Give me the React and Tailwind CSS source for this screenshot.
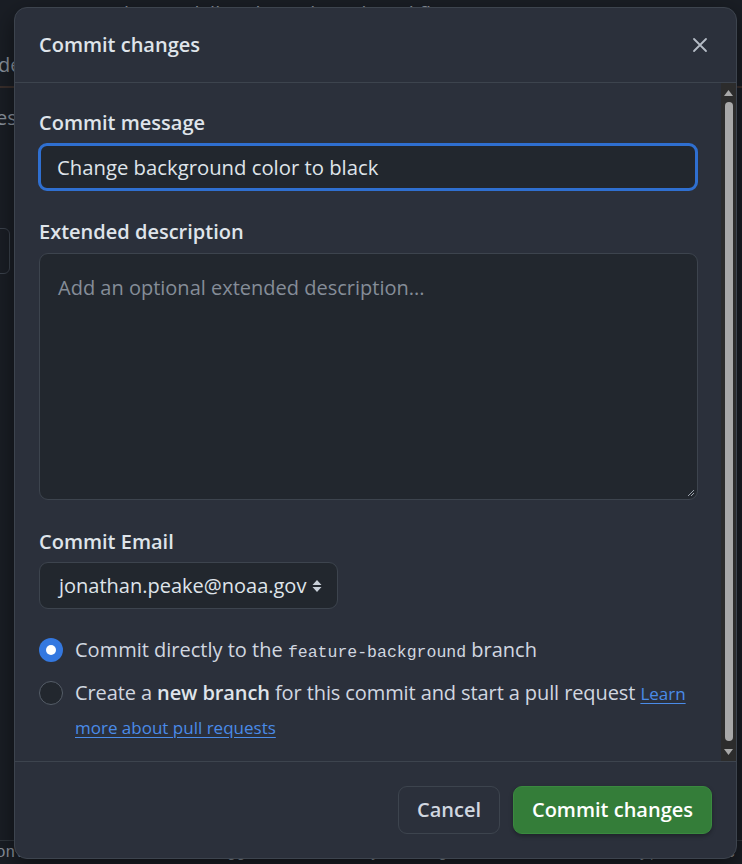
import React from "react";

const sans = { fontFamily: '"Open Sans", "Noto Sans", sans-serif' };

export default function App() {
  return (
    <div className="relative w-[742px] h-[864px] overflow-hidden bg-[#1a1e25]" style={sans}>
      {/* background page (dimmed) */}
      <div className="flex flex-col h-full text-[#8b939e]">
        <div className="flex items-center h-[60px] px-[60px] gap-4 text-[20px] -mt-[16px]">
          <span>jonpeake</span><span>/</span><span>skills-release-based-workflow</span>
        </div>
        <div className="flex items-center h-[44px] px-0 text-[20px] border-b-2 border-[#3a2f2c]">
          <span className="-ml-[2px]">de</span>
        </div>
        <div className="h-[60px] flex items-center text-[20px] -ml-[4px]">es</div>
        <div className="ml-[-20px] mt-[80px] w-[30px] h-[46px] border border-[#3b424c] rounded-[6px]" />
        <div className="flex-1" />
        <div className="h-[24px] border-t border-[#30363d] text-[16px] leading-[24px] whitespace-nowrap -ml-[4px]" style={{ fontFamily: '"Liberation Mono", monospace' }}>
          ontrol + shift + m to toggle the tab key moving focus. Alternatively, use esc then
        </div>
      </div>

      {/* modal */}
      <div className="absolute left-[14px] top-[7px] w-[723px] h-[852px] bg-[#2b303b] border border-[#3d444e] rounded-[13px] flex flex-col text-[#d1d7e0] shadow-[0_8px_24px_rgba(0,0,0,0.5)]">
        <div className="h-[75px] shrink-0 flex items-center justify-between pl-[24px] pr-[28px] border-b border-[#3d444e]">
          <span className="text-[20px] font-semibold text-[#dfe4ea]">Commit changes</span>
          <svg width="16" height="16" viewBox="0 0 16 16" className="text-[#b5bcc6]">
            <path d="M2 2 L14 14 M14 2 L2 14" stroke="currentColor" strokeWidth="1.8" strokeLinecap="round" />
          </svg>
        </div>

        <div className="flex flex-1 min-h-0">
          <div className="flex-1 pl-[24px] pr-[23px] pt-[26px] flex flex-col">
            <div className="text-[20px] leading-[28px] font-semibold text-[#dfe4ea]">Commit message</div>
            <div className="mt-[6px] h-[48px] rounded-[9px] border-[3px] border-[#2f6fd0] bg-[#22272e] flex items-center pl-[16px] -ml-[1px] text-[20.3px] text-[#dfe4ea]">
              Change background color to black
            </div>

            <div className="mt-[27px] text-[20px] leading-[28px] font-semibold text-[#dfe4ea]">Extended description</div>
            <div className="relative mt-[7px] h-[247px] rounded-[9px] border border-[#3d444e] bg-[#22272e] pl-[18px] pt-[20px] text-[20px] leading-[28px] text-[#858d98]">
              Add an optional extended description...
              <svg width="8" height="8" viewBox="0 0 8 8" className="absolute right-[2px] bottom-[2px] text-[#9aa1ab]">
                <path d="M7 1 L1 7 M7 4 L4 7" stroke="currentColor" strokeWidth="1" />
              </svg>
            </div>

            <div className="mt-[28px] text-[20px] leading-[28px] font-semibold text-[#dfe4ea]">Commit Email</div>
            <div className="mt-[6px] w-[299px] h-[47px] rounded-[9px] border border-[#3d444e] bg-[#22272e] flex items-center pl-[19px] gap-[6px] text-[20px] text-[#dfe4ea]">
              <span>jonathan.peake@noaa.gov</span>
              <svg width="10" height="16" viewBox="0 0 10 16" className="text-[#c9d0d9]">
                <path d="M5 2 L9.5 7 H0.5 Z M5 14 L9.5 9 H0.5 Z" fill="currentColor" />
              </svg>
            </div>

            <div className="mt-[24px] flex items-start gap-[12px]">
              <div className="mt-[5px] w-[24px] h-[24px] rounded-full bg-[#3478e0] flex items-center justify-center shrink-0">
                <div className="w-[10px] h-[10px] rounded-full bg-white" />
              </div>
              <div className="text-[20px] leading-[33px] text-[#d1d7e0]">
                Commit directly to the <span className="text-[16.5px] leading-[20px]" style={{ fontFamily: '"Liberation Mono", monospace' }}>feature-background</span> branch
              </div>
            </div>

            <div className="mt-[10px] flex items-start gap-[12px]">
              <div className="mt-[5px] w-[24px] h-[24px] rounded-full border border-[#555d68] bg-[#22272e] shrink-0" />
              <div className="text-[20px] leading-[34px] text-[#d1d7e0] tracking-[-0.1px]">
                Create a <span className="font-semibold text-[#dfe4ea]">new branch</span> for this commit and start a pull request{" "}
                <span className="text-[#4a8be8] underline underline-offset-[3px] text-[17px] leading-[20px] tracking-normal">Learn more about pull requests</span>
              </div>
            </div>
          </div>

          {/* scrollbar */}
          <div className="w-[15px] shrink-0 bg-[#2c2c2c] flex flex-col items-center pt-[7px] pb-[6px]">
            <svg width="9" height="6" viewBox="0 0 9 6"><path d="M4.5 0 L9 6 H0 Z" fill="#a8a8a8" /></svg>
            <div className="mt-[6px] w-[8px] flex-1 rounded-full bg-[#a8a8a8]" />
            <div className="h-[8px]" />
            <svg width="9" height="6" viewBox="0 0 9 6"><path d="M4.5 6 L9 0 H0 Z" fill="#a8a8a8" /></svg>
          </div>
        </div>

        <div className="h-[97px] shrink-0 border-t border-[#3d444e] flex items-center justify-end gap-[13px] pr-[24px]">
          <div className="h-[48px] px-[18px] rounded-[9px] border border-[#3d444e] bg-[#2b303b] flex items-center text-[20px] font-semibold text-[#d1d7e0]">
            Cancel
          </div>
          <div className="h-[48px] px-[18px] rounded-[9px] bg-[#347d39] border border-[#3a8a3f] flex items-center text-[20px] font-semibold text-white shadow-[0_2px_4px_rgba(0,0,0,0.3)]">
            Commit changes
          </div>
        </div>
      </div>
    </div>
  );
}
